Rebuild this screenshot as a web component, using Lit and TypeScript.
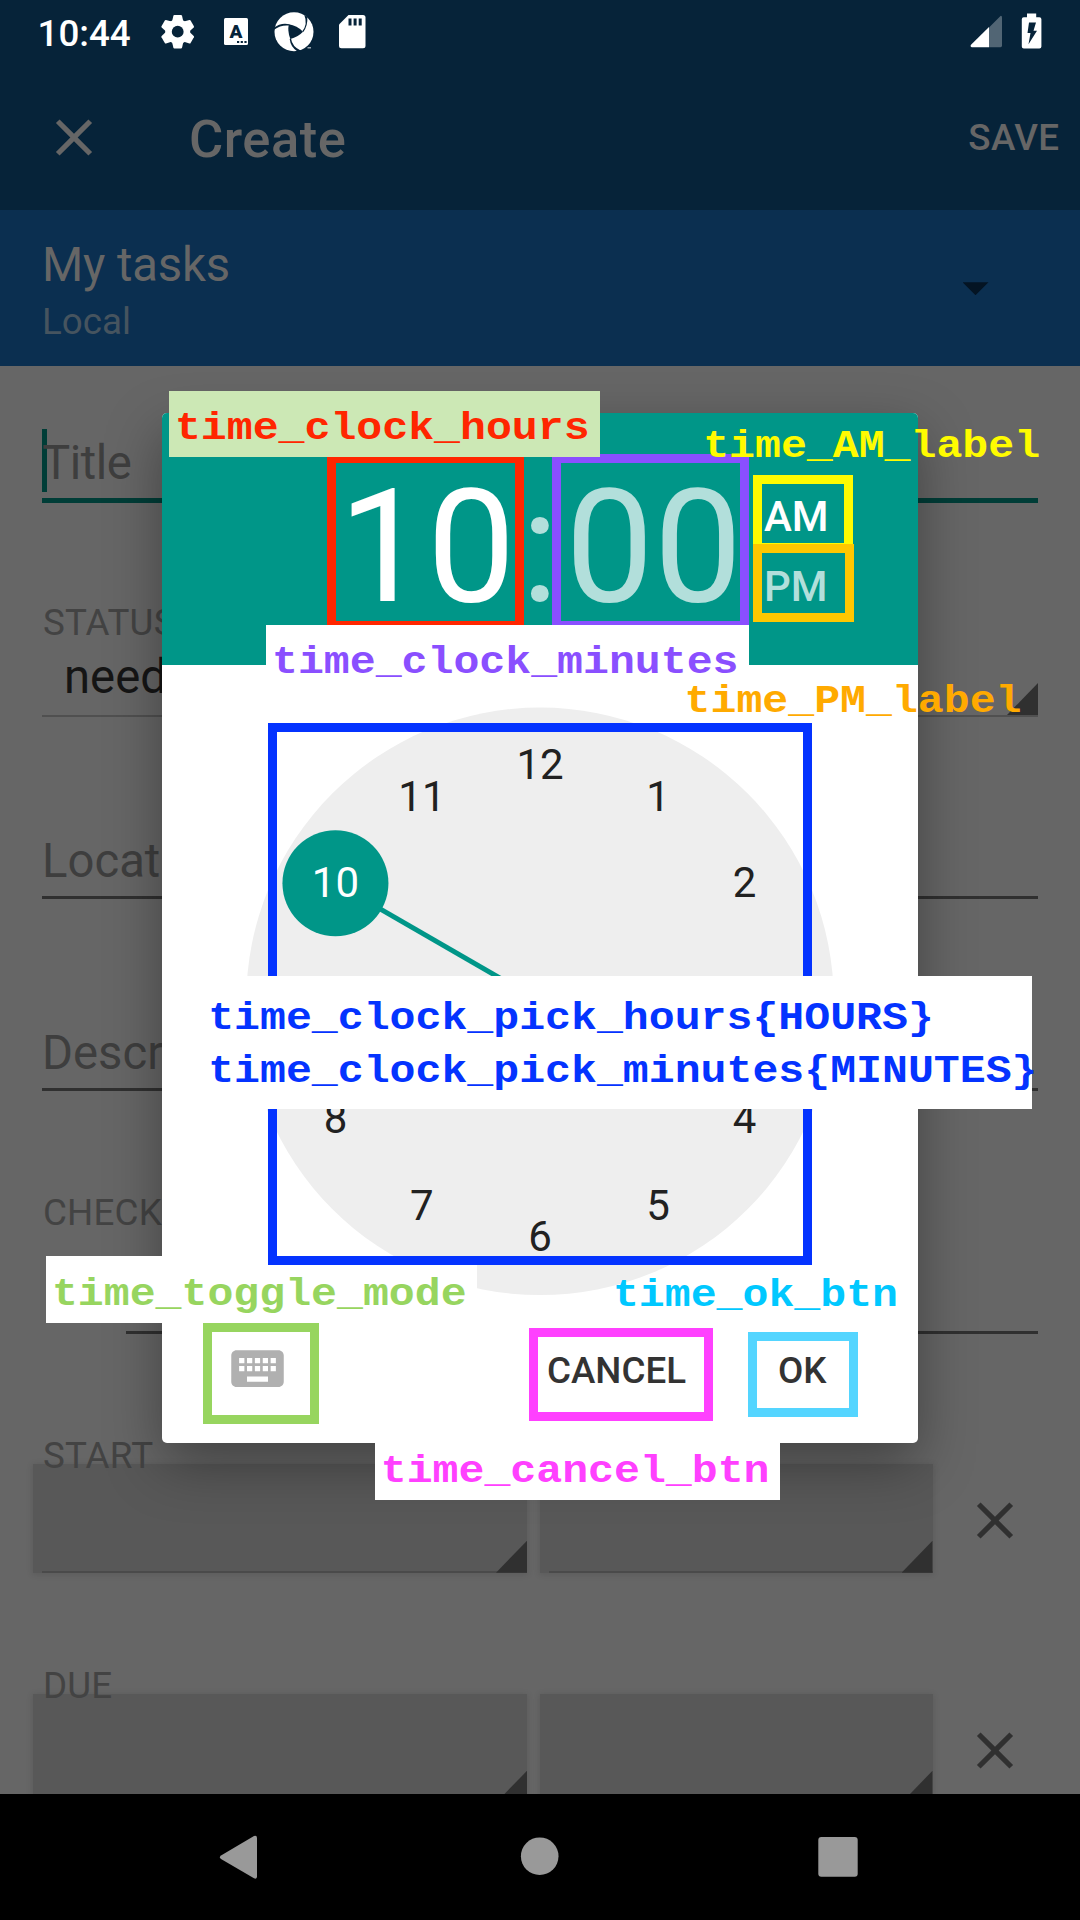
import { LitElement, html, svg, css } from "lit";
import { customElement } from "lit/decorators.js";
import { styleMap } from "lit/directives/style-map.js";

interface Frame { x: number; y: number; w: number; h: number; color: string; }
interface Note { x: number; y: number; w: number; h: number; bg: string; color: string; tx: number; base: number; lines: string[]; }

const FRAMES: Frame[] = [
  { x: 327, y: 454, w: 197, h: 176, color: "#ff2600" },
  { x: 552, y: 454, w: 197, h: 176, color: "#8a4fff" },
  { x: 753, y: 475, w: 100, h: 77, color: "#fffb00" },
  { x: 753, y: 544, w: 101, h: 78, color: "#ffc700" },
  { x: 268.2, y: 723, w: 544.3, h: 541.5, color: "#0433ff" },
  { x: 203.2, y: 1323, w: 116, h: 101.4, color: "#97d55f" },
  { x: 529.3, y: 1328, w: 184.2, h: 93, color: "#ff40ff" },
  { x: 748.4, y: 1332, w: 110, h: 85, color: "#54d5ff" },
];

// Drawn beneath the frames, since its backing touches the dial frame.
const TOGGLE_NOTE: Note =
  { x: 45.8, y: 1256.3, w: 431.2, h: 66.4, bg: "#fff", color: "#97d55f", tx: 51.9, base: 1305.6, lines: ["time_toggle_mode"] };

const NOTES: Note[] = [
  { x: 169, y: 390.5, w: 431, h: 66.3, bg: "#cce8b5", color: "#ff2600", tx: 174.9, base: 440, lines: ["time_clock_hours"] },
  { x: 266, y: 624.7, w: 483, h: 66.3, bg: "#fff", color: "#8a4fff", tx: 272, base: 674, lines: ["time_clock_minutes"] },
  { x: 698, y: 409, w: 350, h: 66, bg: "transparent", color: "#fffb00", tx: 703.2, base: 458, lines: ["time_AM_label"] },
  { x: 679, y: 663, w: 350, h: 66, bg: "transparent", color: "#ffaa00", tx: 684.6, base: 712.7, lines: ["time_PM_label"] },
  { x: 202, y: 976, w: 830.4, h: 132.7, bg: "#fff", color: "#0433ff", tx: 208.2, base: 1030, lines: ["time_clock_pick_hours{HOURS}", "time_clock_pick_minutes{MINUTES}"] },
  { x: 607, y: 1257, w: 300, h: 66, bg: "transparent", color: "#00c8ff", tx: 612.9, base: 1306.7, lines: ["time_ok_btn"] },
  { x: 374.7, y: 1433.5, w: 405.3, h: 66.5, bg: "#fff", color: "#ff40ff", tx: 380.8, base: 1482.7, lines: ["time_cancel_btn"] },
];

const HOURS = [12, 1, 2, 4, 5, 6, 7, 8, 10, 11];
const CLOSE = "M19 6.41L17.59 5 12 10.59 6.41 5 5 6.41 10.59 12 5 17.59 6.41 19 12 13.41 17.59 19 19 17.59 13.41 12z";

const closeIcon = () => html`<svg class="close" viewBox="0 0 24 24"><path d=${CLOSE}></path></svg>`;

@customElement("annotation-layer")
class AnnotationLayer extends LitElement {
  static styles = css`
    :host { position: absolute; inset: 0; overflow: hidden; z-index: 3; }
    .frame { position: absolute; box-sizing: border-box; border: 9px solid; }
    .note {
      position: absolute; box-sizing: border-box;
      font: bold 43.2px/52.7px "Liberation Mono", monospace; white-space: pre;
    }
    .line { display: block; transform: scaleY(0.9); }
  `;
  private note(n: Note) {
    return html`<div class="note" style=${styleMap({
      left: `${n.x}px`, top: `${n.y}px`, width: `${n.w}px`, height: `${n.h}px`, background: n.bg, color: n.color,
      paddingLeft: `${n.tx - n.x}px`, paddingTop: `${n.base - 36.8 - n.y}px`,
    })}>${n.lines.map((l) => html`<span class="line">${l}</span>`)}</div>`;
  }
  render() {
    return html`
      ${this.note(TOGGLE_NOTE)}
      ${FRAMES.map((f) => html`<div class="frame" style=${styleMap({
        left: `${f.x}px`, top: `${f.y}px`, width: `${f.w}px`, height: `${f.h}px`, borderColor: f.color,
      })}></div>`)}
      ${NOTES.map((n) => this.note(n))}
    `;
  }
}

@customElement("time-picker")
class TimePicker extends LitElement {
  static styles = css`
    :host {
      position: absolute; left: 162px; top: 413px; width: 756px; height: 1029.7px; z-index: 2;
      display: flex; flex-direction: column; background: #fff; border-radius: 5px; overflow: hidden;
    }
    .head {
      flex: none; height: 251.7px; background: #009688; color: #b2dfdb;
      display: flex; align-items: flex-start; padding-left: 176.4px; box-sizing: border-box;
    }
    .time { display: flex; font-size: 157.5px; line-height: 184px; margin-top: 42px; }
    .time span { display: block; }
    .on { color: #fff; }
    .hours, .mins { width: 177px; }
    .colon { width: 48.8px; text-align: center; }
    .mins { padding-left: 1px; width: 176px; }
    .ampm { display: flex; flex-direction: column; font-size: 42px; font-weight: 500; line-height: 70px; margin: 68.9px 0 0 22.8px; }
    .face { flex: none; height: 652px; }
    .face svg { display: block; width: 756px; height: 652px; }
    .face text { font-family: Roboto, sans-serif; font-size: 42px; text-anchor: middle; fill: #212121; }
    .face .sel { fill: #fff; }
    .actions {
      display: flex; align-items: center; height: 63px; padding: 0 86px 0 64px; margin-top: 20.5px;
      font-size: 36.75px; line-height: 44px; font-weight: 500; color: #333;
    }
    .kb { width: 63px; height: 63px; fill: #b0b0b0; flex: none; }
    .cancel { margin-left: 258px; padding-top: 4px; }
    .ok { margin-left: 92px; padding-top: 4px; }
  `;
  render() {
    const cx = 378, cy = 336.3, r = 236.2;
    const at = (h: number) => ({ x: cx + r * Math.sin((h * Math.PI) / 6), y: cy - r * Math.cos((h * Math.PI) / 6) });
    const sel = at(10);
    return html`
      <div class="head">
        <div class="time"><span class="hours on">10</span><span class="colon">:</span><span class="mins">00</span></div>
        <div class="ampm"><span class="on">AM</span><span>PM</span></div>
      </div>
      <div class="face">
        <svg viewBox="0 0 756 652">
          <circle cx=${cx} cy=${cy} r="293.8" fill="#eeeeee"></circle>
          <line x1=${cx} y1=${cy} x2=${sel.x} y2=${sel.y} stroke="#009688" stroke-width="5"></line>
          <circle cx=${sel.x} cy=${sel.y} r="53" fill="#009688"></circle>
          ${HOURS.map((h) => svg`<text class=${h === 10 ? "sel" : ""} x=${at(h).x} y=${at(h).y + 13.8}>${h}</text>`)}
        </svg>
      </div>
      <div class="actions">
        <svg class="kb" viewBox="0 0 24 24"><path d="M20 5H4c-1.1 0-1.99.9-1.99 2L2 17c0 1.1.9 2 2 2h16c1.1 0 2-.9 2-2V7c0-1.1-.9-2-2-2zm-9 3h2v2h-2V8zm0 3h2v2h-2v-2zM8 8h2v2H8V8zm0 3h2v2H8v-2zm-1 2H5v-2h2v2zm0-3H5V8h2v2zm9 7H8v-2h8v2zm0-4h-2v-2h2v2zm0-3h-2V8h2v2zm3 3h-2v-2h2v2zm0-3h-2V8h2v2z"></path></svg>
        <span class="cancel">CANCEL</span><span class="ok">OK</span>
      </div>
    `;
  }
}

@customElement("app-root")
class AppRoot extends LitElement {
  static styles = css`
    :host {
      display: grid; grid-template-rows: 210px 156px 1428px 126px; position: relative;
      width: 1080px; height: 1920px; overflow: hidden; background: #666;
      font-family: Roboto, sans-serif; color: #666;
    }
    .top { background: #062339; }
    .status { height: 63px; display: flex; color: #fff; }
    .clock { font-size: 36.75px; font-weight: 500; line-height: 44px; padding: 11.5px 0 0 37.5px; width: 100.5px; }
    .icons { width: 942px; height: 63px; flex: none; }
    .toolbar { height: 147px; display: flex; align-items: center; box-sizing: border-box; padding: 2px 20.5px 0 42.5px; }
    .close { width: 62px; height: 63px; fill: #666; flex: none; }
    .title { font-size: 52.5px; font-weight: 500; line-height: 62px; margin-left: 84.5px; flex: 1; padding-top: 2px; letter-spacing: 0.5px; }
    .save { font-size: 36.75px; font-weight: 500; line-height: 44px; padding-top: 1px; letter-spacing: 0.4px; }
    .list { background: #0b2f50; display: flex; justify-content: space-between; padding: 27px 91.5px 0 42px; }
    .name { font-size: 47.25px; line-height: 56px; letter-spacing: -0.15px; }
    .acct { font-size: 36.75px; line-height: 44px; margin-top: 6.9px; color: #46545f; }
    .caret { width: 26px; height: 13px; margin-top: 45.3px; background: #041423; clip-path: polygon(0 0, 100% 0, 50% 100%); }
    .form { overflow: hidden; padding: 68.6px 42px 0; isolation: isolate; }
    .in { font-size: 47.25px; line-height: 56px; height: 56px; color: #3e3e3e; }
    .lab { font-size: 36.75px; line-height: 44px; height: 44px; color: #434343; position: relative; z-index: 1; padding-left: 0.9px; letter-spacing: 0.2px; }
    .line { height: 3px; margin-top: 7px; background: #303030; }
    .first { position: relative; letter-spacing: -0.5px; }
    .cursor { position: absolute; left: 0; top: -5.6px; width: 5px; height: 63px; background: #003d37; z-index: -1; }
    .focus { height: 5px; margin-top: 7.4px; background: #003d37; }
    .statuslab { margin-top: 98px; }
    .spin { position: relative; padding: 3.6px 0 10.4px 22px; border-bottom: 2px solid #505050; color: #151515; }
    .corner { position: absolute; right: 0; bottom: 0; width: 31px; height: 32px; background: #303030; clip-path: polygon(100% 0, 100% 100%, 0 100%); }
    .loc { margin-top: 116.3px; }
    .loc + .line { margin-top: 6.6px; }
    .desc { margin-top: 126.3px; }
    .desc + .line { margin-top: 6.6px; }
    .check { margin-top: 100px; }
    .item { margin: 96px 0 0 84px; }
    .start { margin-top: 99.9px; }
    .due { margin-top: 90.9px; }
    .row { display: flex; margin: -13.9px 0 0 -9px; height: 109px; align-items: center; }
    .date, .hour { position: relative; height: 109px; background: #585858; box-shadow: 0 1px 6px 1px rgba(0, 0, 0, 0.1); }
    .date { width: 494px; }
    .hour { width: 392.5px; margin-left: 13px; }
    .rule { position: absolute; left: 9px; right: 0; bottom: 0; height: 2px; background: #4a4a4a; }
    .row .close { margin: 4px 0 0 31.5px; fill: #303030; }
    .nav { background: #000; position: relative; z-index: 1; }
    .nav svg { display: block; width: 1080px; height: 126px; fill: #999; }
    .shadow { position: absolute; z-index: 1; left: 162px; top: 413px; width: 756px; height: 1030px; border-radius: 5px; box-shadow: 0 20px 55px rgba(0, 0, 0, 0.36); }
  `;

  private dateRow() {
    return html`<div class="row">
      <div class="date"><div class="rule"></div><div class="corner"></div></div>
      <div class="hour"><div class="rule"></div><div class="corner"></div></div>
      ${closeIcon()}
    </div>`;
  }

  render() {
    return html`
      <div class="top">
        <div class="status">
          <span class="clock">10:44</span>
          <svg class="icons" viewBox="138 0 942 63" fill="#fff">
            <g transform="translate(177.700 31.700)">
              <circle r="12.500"></circle>
              ${[0, 60, 120, 180, 240, 300].map((a) => svg`<path transform="rotate(${a})" d="M-5.600 -10.500L-4.300 -16Q-4.100 -16.800 -3.300 -16.800H3.300Q4.100 -16.800 4.300 -16L5.600 -10.500z"></path>`)}
              <circle r="5.900" fill="#062339"></circle>
            </g>
            <rect x="224" y="18" width="24" height="27" rx="1.500"></rect>
            <text x="236" y="38.200" text-anchor="middle" font-family="Roboto, sans-serif" font-weight="900" font-size="19" fill="#062339">A</text>
            <path d="M237 41h2.200v2h-2.200zM240.700 41h2.200v2h-2.200zM244.400 41h2.200v2h-2.200z" fill="#062339"></path>
            <circle cx="294" cy="31.700" r="19.500"></circle>
            <path d="M288.800 24.300Q297 25.500 303 31.700Q298 37 290.300 39Q287.300 31 288.800 24.300z" fill="#062339"></path>
            <g fill="#062339">
              <path d="M273.500 28Q281 22.300 289.300 24.300V25.600Q281 24.500 274 29.800z"></path>
              <path d="M304.300 15Q308 24 302.300 31.300L303.300 32Q308 25.500 307.300 17z"></path>
              <path d="M301 50.800Q292 46.500 291 38.500L289.700 39Q290.500 47 297.500 51.500z"></path>
            </g>
            <path d="M307.500 47h3.500v1.500h-3.500z" opacity=".6"></path>
            <path d="M348.500 15H363a2.500 2.500 0 0 1 2.500 2.500v28.300a2.500 2.500 0 0 1-2.500 2.500H341.500a2.500 2.500 0 0 1-2.500-2.500V24.500z"></path>
            <path d="M348.500 18.500h3v7h-3zM353.600 18.500h3v7h-3zM358.700 18.500h3v7h-3z" fill="#062339"></path>
            <path d="M1000.500 15.900Q1002 15.500 1002 17.500V45.500Q1002 47.300 1000.500 47.300H989V27.500z" opacity=".3"></path>
            <path d="M989 27V47.300H972Q969.800 46.500 971 44.700z"></path>
            <path d="M1027 13.500h9.200v3.800h3.200a2 2 0 0 1 2 2v27.200a2 2 0 0 1-2 2h-15.600a2 2 0 0 1-2-2V19.300a2 2 0 0 1 2-2h3.200z"></path>
            <path d="M1029 22.500h7l-2.500 8.300h3.500l-8.500 13.500 2-11.300h-3z" fill="#062339"></path>
          </svg>
        </div>
        <div class="toolbar">${closeIcon()}<span class="title">Create</span><span class="save">SAVE</span></div>
      </div>
      <div class="list">
        <div>
          <div class="name">My tasks</div>
          <div class="acct">Local</div>
        </div>
        <div class="caret"></div>
      </div>
      <div class="form">
        <div class="in first"><div class="cursor"></div>Title</div>
        <div class="line focus"></div>
        <div class="lab statuslab">STATUS</div>
        <div class="in spin">need<div class="corner"></div></div>
        <div class="in loc">Locat</div>
        <div class="line"></div>
        <div class="in desc">Descr</div>
        <div class="line"></div>
        <div class="lab check">CHECK</div>
        <div class="line item"></div>
        <div class="lab start">START</div>
        ${this.dateRow()}
        <div class="lab due">DUE</div>
        ${this.dateRow()}
      </div>
      <div class="nav">
        <svg viewBox="0 1794 1080 126">
          <path d="M221 1855.500L254 1836Q257 1835 257 1838V1876.500Q257 1879.500 254 1878.300L221 1859Q218.500 1857.300 221 1855.500z"></path>
          <circle cx="539.700" cy="1856.200" r="18.800"></circle>
          <rect x="818.300" y="1837" width="39.400" height="39.700" rx="3"></rect>
        </svg>
      </div>
      <div class="shadow"></div>
      <time-picker></time-picker>
      <annotation-layer></annotation-layer>
    `;
  }
}
